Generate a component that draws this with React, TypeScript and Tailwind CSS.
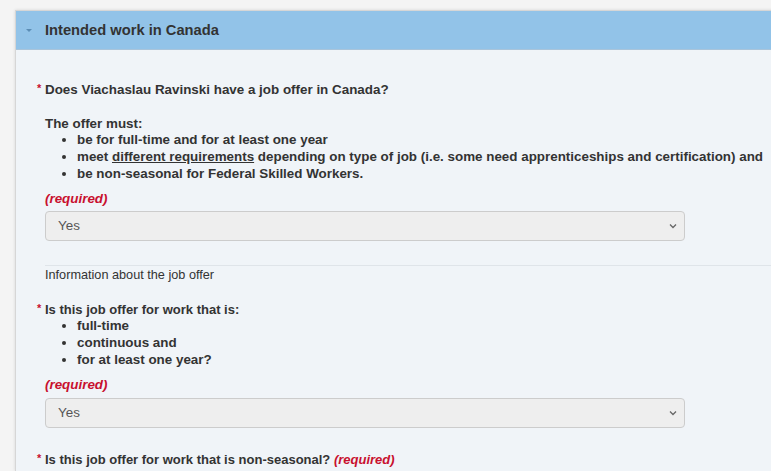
import type { ReactNode } from "react";

function Question({ children, small }: { children: ReactNode; small?: boolean }) {
  return (
    <div className={`relative font-bold leading-[17px] text-[#333] ${small ? "text-[13px]" : "text-[13.4px]"}`}>
      <span className="absolute -left-[8px] top-[-1px] text-[11px] text-[#c8102e]">*</span>
      {children}
    </div>
  );
}

function BulletList({ items }: { items: ReactNode[] }) {
  return (
    <ul className="-mt-[1px] list-disc pl-[32px] font-bold text-[13.4px] leading-[17px] text-[#333]">
      {items.map((item, i) => (
        <li key={i}>{item}</li>
      ))}
    </ul>
  );
}

function Required() {
  return <div className="font-bold italic text-[13.4px] leading-[17px] text-[#c8102e]">(required)</div>;
}

function YesSelect() {
  return (
    <div className="relative w-[640px] h-[30px]">
      <select
        defaultValue="yes"
        className="w-full h-full appearance-none rounded-[4px] border border-[#cccccc] bg-[#eeeeee] pl-[12px] text-[13.4px] text-[#555] outline-none"
      >
        <option value="yes">Yes</option>
        <option value="no">No</option>
      </select>
      <svg
        className="pointer-events-none absolute right-[8px] top-[12px]"
        width="8"
        height="6"
        viewBox="0 0 8 6"
        fill="none"
        stroke="#666"
        strokeWidth="1.3"
      >
        <path d="M1 1.5 L4 4.5 L7 1.5" />
      </svg>
    </div>
  );
}

export default function App() {
  return (
    <div
      className="h-[471px] w-full overflow-hidden bg-[#f4f4f4] pt-[10px] pl-[15px]"
      style={{ fontFamily: '"Liberation Sans", Arial, sans-serif' }}
    >
      <div className="-mr-[20px] h-full border-l border-t border-[#d6d6d6] bg-[#f0f4f8] shadow-[0_0_3px_rgba(0,0,0,0.12)]">
        <div className="flex h-[39px] items-center border-b border-[#a9c4da] bg-[#92c3e8]">
          <span className="ml-[10px] mt-[1px] h-0 w-0 border-x-[3px] border-t-[3px] border-x-transparent border-t-[#5b8db5]" />
          <h2 className="ml-[13px] text-[14.7px] font-bold text-[#333]">Intended work in Canada</h2>
        </div>

        <div className="pl-[29px]">
          <div className="mt-[31px]">
            <Question>Does Viachaslau Ravinski have a job offer in Canada?</Question>
          </div>

          <div className="mt-[17px] font-bold text-[13.4px] leading-[17px] text-[#333]">The offer must:</div>
          <BulletList
            items={[
              "be for full-time and for at least one year",
              <>
                meet <span className="underline">different requirements</span> depending on type of job (i.e. some
                need apprenticeships and certification) and
              </>,
              "be non-seasonal for Federal Skilled Workers.",
            ]}
          />

          <div className="mt-[8px]">
            <Required />
          </div>
          <div className="mt-[4px]">
            <YesSelect />
          </div>

          <div className="mt-[24px] border-t border-[#dfe4e9] pt-[1px]">
            <div className="text-[12.7px] leading-[17px] text-[#333]">Information about the job offer</div>
          </div>

          <div className="mt-[17px]">
            <Question small>Is this job offer for work that is:</Question>
          </div>
          <BulletList items={["full-time", "continuous and", "for at least one year?"]} />

          <div className="mt-[8px]">
            <Required />
          </div>
          <div className="mt-[5px]">
            <YesSelect />
          </div>

          <div className="mt-[23px]">
            <Question small>
              Is this job offer for work that is non-seasonal?{" "}
              <span className="italic text-[#c8102e]">(required)</span>
            </Question>
          </div>
        </div>
      </div>
    </div>
  );
}
